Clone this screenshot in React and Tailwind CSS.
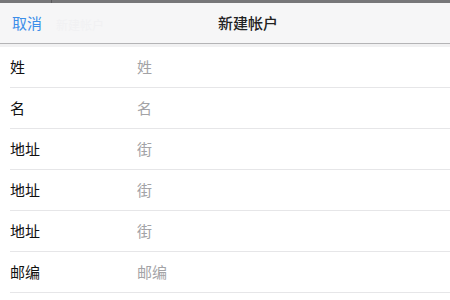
const rows = [
  { label: '姓', placeholder: '姓' },
  { label: '名', placeholder: '名' },
  { label: '地址', placeholder: '街' },
  { label: '地址', placeholder: '街' },
  { label: '地址', placeholder: '街' },
  { label: '邮编', placeholder: '邮编' },
];

export default function App() {
  return (
    <div
      className="h-[300px] w-[450px] overflow-hidden bg-white"
      style={{ fontFamily: '"Noto Sans CJK SC", "Noto Sans", sans-serif' }}
    >
      <div className="flex h-[3px] bg-[#777779] pl-[51px]">
        <div className="w-px bg-[#5a5a5c]" />
      </div>
      <div className="flex h-[40px] items-center bg-[#f6f6f7] pl-3">
        <button className="w-[30px] whitespace-nowrap text-[15px] text-[#3d8ee9]">取消</button>
        <span className="ml-[14px] mt-[3px] w-[48px] whitespace-nowrap text-[12px] text-[#f1f1f3]">新建帐户</span>
        <h1 className="ml-[114px] whitespace-nowrap text-[15px] font-medium text-[#222]">新建帐户</h1>
      </div>
      <div className="h-px bg-[#b4b4b6]" />
      <div className="h-[3px] bg-[#f1f1f2]" />
      <div className="pl-[10px]">
        {rows.map((r, i) => (
          <div key={i} className="flex h-[41px] items-center border-b border-[#e6e6e8]">
            <span className="w-[127px] text-[15px] text-[#111]">{r.label}</span>
            <input
              placeholder={r.placeholder}
              className="flex-1 bg-transparent text-[15px] outline-none placeholder:text-[#a3a3a6]"
            />
          </div>
        ))}
      </div>
    </div>
  );
}
